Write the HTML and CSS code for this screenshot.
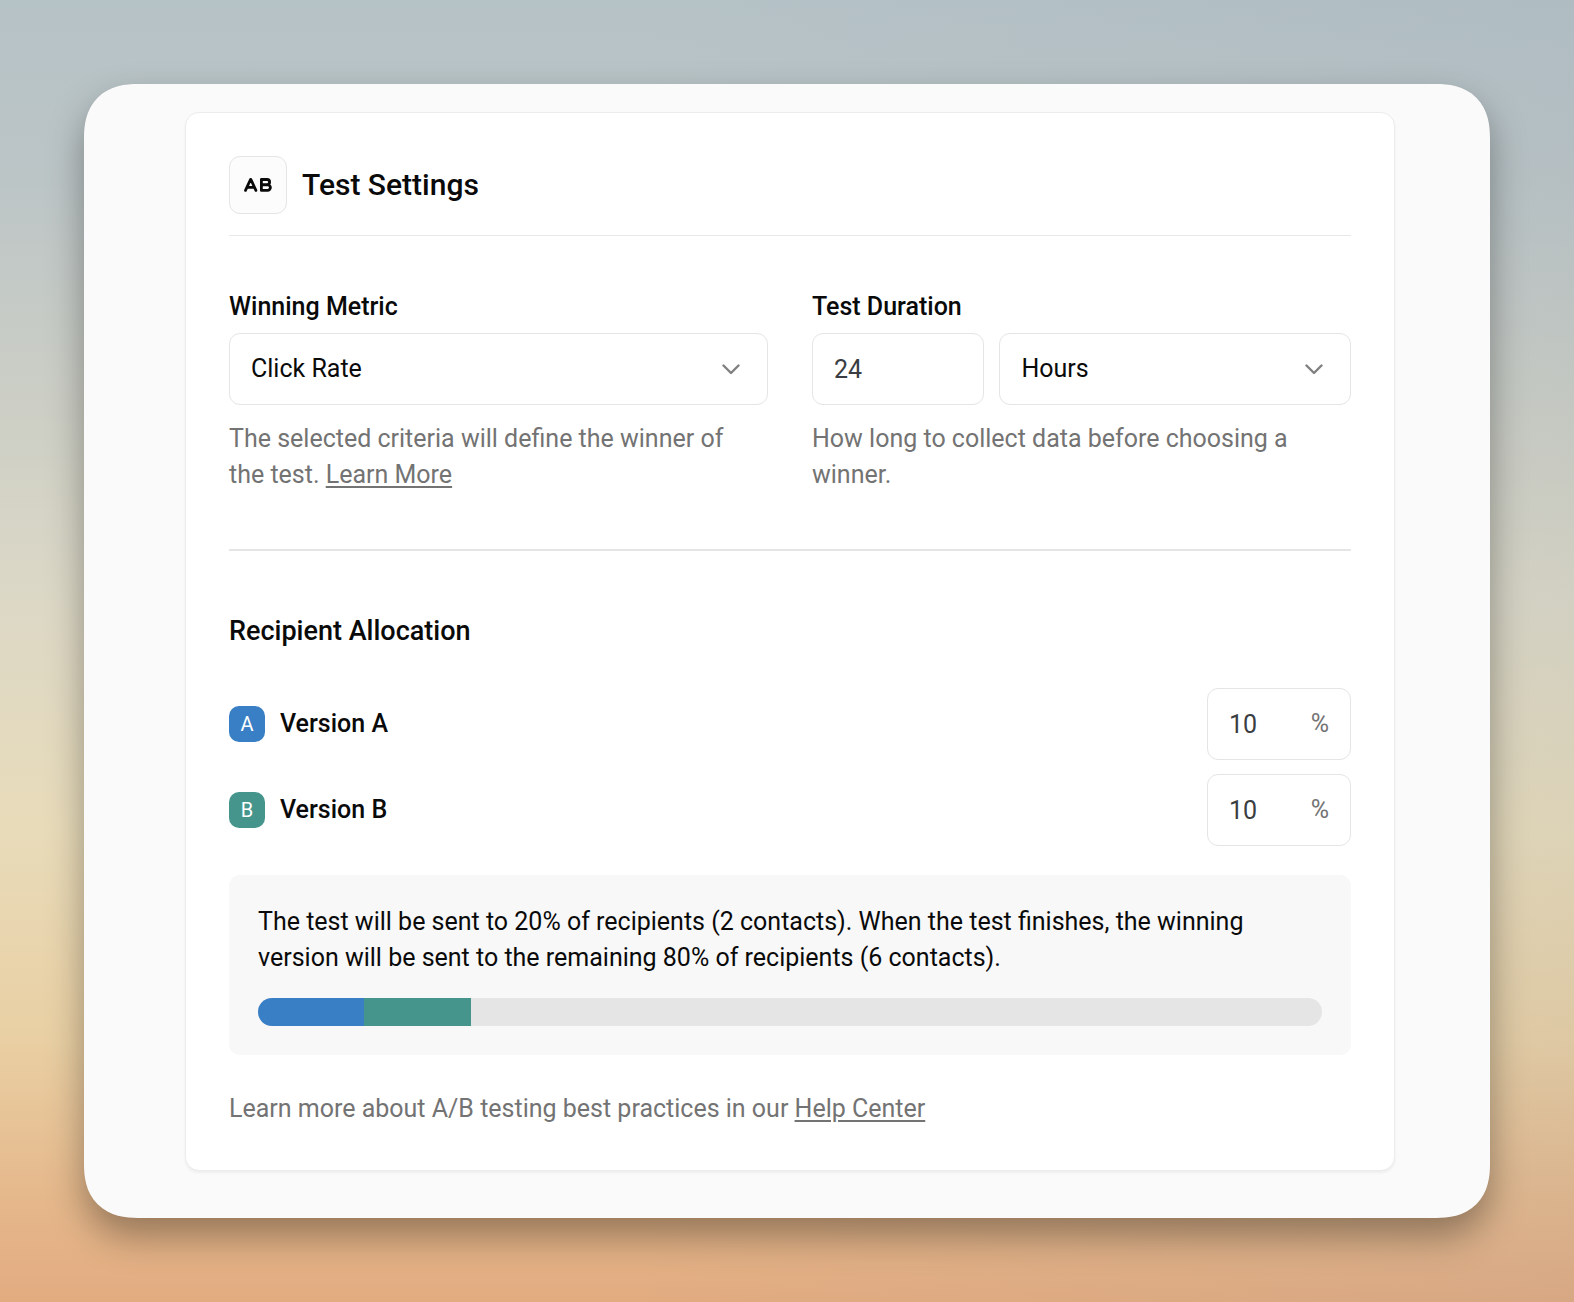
FILE: index.html
```html
<!DOCTYPE html>
<html lang="en">
<head>
  <meta charset="utf-8">
  <title>Test Settings</title>
  <link rel="stylesheet" href="styles.css">
</head>
<body>
  <main class="panel">
    <form class="card">
      <header class="card-header">
        <span class="ab-icon">
          <svg width="28" height="14" viewBox="0 0 28 14" fill="none" stroke="#0a0a0a" stroke-width="2.8" stroke-linecap="round" stroke-linejoin="round" aria-hidden="true">
            <path d="M1.5 12.4 6.5 1.5h.4l5 10.9M3.4 9.4h6.6"/>
            <path d="M17.4 1.5h5.6a2.6 2.6 0 0 1 0 5.2h-5.6zM17.4 6.8h6.2a2.8 2.8 0 0 1 0 5.6h-6.2z"/>
          </svg>
        </span>
        <h1>Test Settings</h1>
      </header>

      <div class="fields">
        <div class="field">
          <label for="metric">Winning Metric</label>
          <div class="select">
            <select id="metric">
              <option>Click Rate</option>
              <option>Open Rate</option>
            </select>
            <svg class="chevron" width="18" height="11" viewBox="0 0 18 11" aria-hidden="true"><path d="M1.5 1.5 9 9l7.5-7.5"/></svg>
          </div>
          <p class="hint">The selected criteria will define the winner of the test. <a href="#">Learn More</a></p>
        </div>
        <div class="field">
          <label for="duration">Test Duration</label>
          <div class="duration">
            <input class="duration-value" id="duration" type="text" inputmode="numeric" value="24">
            <div class="select">
              <select aria-label="Duration unit">
                <option>Hours</option>
                <option>Days</option>
              </select>
              <svg class="chevron" width="18" height="11" viewBox="0 0 18 11" aria-hidden="true"><path d="M1.5 1.5 9 9l7.5-7.5"/></svg>
            </div>
          </div>
          <p class="hint">How long to collect data before choosing a winner.</p>
        </div>
      </div>

      <section class="allocation">
        <h2>Recipient Allocation</h2>
        <div class="version">
          <span class="badge badge-a">A</span>
          <label for="version-a">Version A</label>
          <div class="percent">
            <input id="version-a" type="text" inputmode="numeric" value="10">
            <span>%</span>
          </div>
        </div>
        <div class="version">
          <span class="badge badge-b">B</span>
          <label for="version-b">Version B</label>
          <div class="percent">
            <input id="version-b" type="text" inputmode="numeric" value="10">
            <span>%</span>
          </div>
        </div>
        <div class="summary">
          <p>The test will be sent to 20% of recipients (2 contacts). When the test finishes, the winning version will be sent to the remaining 80% of recipients (6 contacts).</p>
          <div class="bar">
            <div class="bar-a" style="width: 10%"></div>
            <div class="bar-b" style="width: 10%"></div>
          </div>
        </div>
      </section>

      <p class="footnote">Learn more about A/B testing best practices in our <a href="#">Help Center</a></p>
    </form>
  </main>
</body>
</html>
```
FILE: styles.css
```css
* {
    box-sizing: border-box;
}
body {
    min-height: 100vh;
    margin: 0;
    padding: 84px;
    font-family: Roboto, sans-serif;
    font-size: 25px;
    line-height: 36px;
    color: #0a0a0a;
    background:
        linear-gradient(to left, rgba(120, 140, 160, 0.1), transparent 60%),
        linear-gradient(#b5c2c6 0%, #bcc5c6 14%, #cdcfc5 32%, #dcd8c6 46%, #e8dbb9 64%, #e9cfa3 80%, #e5b88b 92%, #e2ab80 100%);
}
h1, h2, p {
    margin: 0;
}
input, select {
    width: 100%;
    height: 72px;
    padding: 0 21px;
    font: inherit;
    color: #0a0a0a;
    background: #fff;
    border: 1px solid #e5e5e5;
    border-radius: 11px;
}
input {
    color: #3a3d42;
}
select {
    appearance: none;
}
.panel {
    padding: 28px 95px 47px 101px;
    background: #fafafa;
    border-radius: 54px;
    corner-shape: superellipse(1.25);
    box-shadow: 0 18px 36px rgba(0, 0, 0, 0.35);
}
.card {
    padding: 43px;
    background: #fff;
    border: 1px solid #ececec;
    border-radius: 14px;
    box-shadow: 0 2px 3px rgba(0, 0, 0, 0.05);
}
.card-header {
    display: flex;
    align-items: center;
    gap: 15px;
    padding-bottom: 21px;
    border-bottom: 1px solid #e8e8e8;
}
.ab-icon {
    display: flex;
    align-items: center;
    justify-content: center;
    width: 58px;
    height: 58px;
    background: #fcfcfc;
    border: 1px solid #e5e5e5;
    border-radius: 11px;
}
h1 {
    font-size: 30px;
    font-weight: 500;
}
h2 {
    margin-bottom: 39px;
    font-size: 27px;
    font-weight: 500;
}
label {
    font-weight: 500;
}
.fields {
    display: grid;
    grid-template-columns: 1fr 1fr;
    gap: 44px;
    padding: 53px 0 56px;
    border-bottom: 2px solid #e5e5e5;
}
.field label {
    display: block;
    margin-bottom: 8px;
}
.duration {
    display: flex;
    gap: 15px;
}
.duration-value {
    flex: 0 0 32%;
    width: 32%;
}
.select {
    position: relative;
    flex: 1;
}
.chevron {
    position: absolute;
    top: 31px;
    right: 28px;
    fill: none;
    stroke: #808080;
    stroke-width: 2.4;
    stroke-linecap: round;
    stroke-linejoin: round;
    pointer-events: none;
}
.hint {
    margin-top: 16px;
    padding-right: 15px;
}
.hint, .footnote {
    color: #737373;
}
a {
    color: inherit;
    text-decoration-thickness: 2px;
    text-underline-offset: 3px;
}
.allocation {
    padding-top: 62px;
}
.version {
    display: flex;
    align-items: center;
    gap: 15px;
    margin-top: 14px;
}
.badge {
    width: 36px;
    height: 36px;
    font-size: 20px;
    text-align: center;
    color: #fff;
    border-radius: 10px;
}
.badge-a, .bar-a {
    background: #397fc5;
}
.badge-b, .bar-b {
    background: #45958d;
}
.percent {
    display: flex;
    align-items: center;
    width: 144px;
    margin-left: auto;
    padding-right: 21px;
    color: #737373;
    border: 1px solid #e5e5e5;
    border-radius: 11px;
}
.percent input {
    flex: 1;
    min-width: 0;
    height: 70px;
    padding-right: 0;
    background: none;
    border: 0;
}
.summary {
    margin-top: 29px;
    padding: 29px;
    background: #f8f8f8;
    border-radius: 11px;
}
.bar {
    display: flex;
    height: 28px;
    margin-top: 22px;
    overflow: hidden;
    background: #e5e5e5;
    border-radius: 14px;
}
.footnote {
    margin-top: 36px;
}
```
